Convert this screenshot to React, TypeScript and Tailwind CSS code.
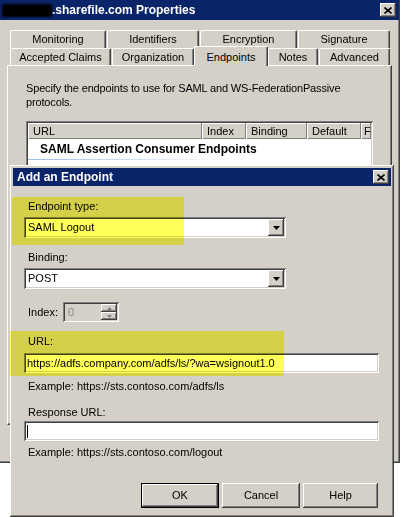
const raised =
  "shadow-[inset_-1px_-1px_#404040,inset_1px_1px_#ffffff,inset_-2px_-2px_#808080,inset_2px_2px_#d4d0c8]";
const sunken =
  "shadow-[inset_1px_1px_#808080,inset_-1px_-1px_#ffffff,inset_2px_2px_#404040,inset_-2px_-2px_#d4d0c8]";

function CloseBox() {
  return (
    <div className={`w-[16px] h-[14px] bg-[#d4d0c8] flex items-center justify-center ${raised}`}>
      <svg width="8" height="7" viewBox="0 0 8 7">
        <path d="M0.5 0.5L7.5 6.5M7.5 0.5L0.5 6.5" stroke="#000" strokeWidth="1.6" />
      </svg>
    </div>
  );
}

function DownArrow() {
  return (
    <svg width="7" height="4" viewBox="0 0 7 4">
      <path d="M0 0H7L3.5 4Z" fill="#000" />
    </svg>
  );
}

function Combo({ value }: { value: string }) {
  return (
    <div className={`relative w-[262px] h-[21px] bg-white flex items-center pl-[4px] ${sunken}`}>
      <span>{value}</span>
      <div
        className={`absolute right-[2px] top-[2px] w-[16px] h-[17px] bg-[#d4d0c8] flex items-center justify-center ${raised}`}
      >
        <DownArrow />
      </div>
    </div>
  );
}

function Tab({ label, w, selected }: { label: string; w: string; selected?: boolean }) {
  if (selected) {
    return (
      <div
        className={`${w} h-[20px] -mt-[2px] -mb-[1px] relative z-10 bg-[#d4d0c8] border-t border-l border-white border-r border-r-[#404040] rounded-t-[2px] shadow-[inset_-1px_0_#808080] flex justify-center pt-[2px]`}
      >
        {label}
      </div>
    );
  }
  return (
    <div
      className={`${w} h-full bg-[#d4d0c8] border-t border-l border-white border-r border-r-[#404040] rounded-t-[2px] shadow-[inset_-1px_0_#808080] flex items-center justify-center`}
    >
      {label}
    </div>
  );
}

function Header({ label, w, pl = "pl-[5px]" }: { label: string; w: string; pl?: string }) {
  return (
    <div
      className={`${w} ${pl} shrink-0 h-full flex items-center border-r border-[#808080] shadow-[inset_1px_1px_#ffffff,inset_0_-1px_#808080] whitespace-nowrap`}
    >
      {label}
    </div>
  );
}

function Button({ label, w, def }: { label: string; w: string; def?: boolean }) {
  return (
    <div
      className={`${w} h-[25px] bg-[#d4d0c8] flex items-center justify-center ${
        def ? "border border-black" : ""
      } ${raised}`}
    >
      {label}
    </div>
  );
}

function Label({ children }: { children: React.ReactNode }) {
  return <div className="h-[13px] leading-[13px] pl-[4px]">{children}</div>;
}

export default function App() {
  return (
    <div className="relative w-[401px] h-[517px] bg-white overflow-hidden font-['Liberation_Sans',Arial,sans-serif] text-[11px] text-black">
      {/* properties window */}
      <div className="absolute left-0 top-0 w-[400px] h-[463px] bg-[#d4d0c8] border-r border-b border-[#404040] shadow-[inset_-1px_-1px_#808080] flex flex-col">
        <div className="h-[20px] bg-[#0a246a] flex items-center pl-[2px] pr-[3px]">
          <div className="w-[50px] h-[13px] bg-black rounded-[2px] blur-[1px]" />
          <span className="text-white font-bold text-[12px]">.sharefile.com Properties</span>
          <div className="ml-auto">
            <CloseBox />
          </div>
        </div>

        <div className="pl-[7px] mt-[10px]">
          <div className="pl-[3px] flex flex-col">
            <div className="flex gap-[1px] h-[18px]">
              <Tab label="Monitoring" w="w-[96px]" />
              <Tab label="Identifiers" w="w-[92px]" />
              <Tab label="Encryption" w="w-[97px]" />
              <Tab label="Signature" w="w-[92px]" />
            </div>
            <div className="flex h-[17px]">
              <Tab label="Accepted Claims" w="w-[101px]" />
              <div className="w-[1px]" />
              <Tab label="Organization" w="w-[82px]" />
              <Tab label="Endpoints" w="w-[74px]" selected />
              <Tab label="Notes" w="w-[50px]" />
              <div className="w-[1px]" />
              <Tab label="Advanced" w="w-[71px]" />
            </div>
          </div>

          <div className="w-[385px] h-[360px] border-t border-l border-white border-r border-b border-r-[#404040] border-b-[#404040] shadow-[inset_-1px_-1px_#808080] pl-[18px] pt-[15px]">
            <p className="leading-[14px] tracking-[-0.15px]">
              Specify the endpoints to use for SAML and WS-FederationPassive
              <br />
              protocols.
            </p>
            <div className={`mt-[12px] w-[347px] h-[80px] bg-white p-[2px] ${sunken}`}>
              <div className="h-[16px] flex bg-[#d4d0c8]">
                <Header label="URL" w="w-[174px]" />
                <Header label="Index" w="w-[44px]" />
                <Header label="Binding" w="w-[61px]" />
                <Header label="Default" w="w-[54px]" />
                <Header label="F" w="w-[10px]" pl="pl-[3px]" />
              </div>
              <div className="h-[20px] flex items-center pl-[12px] font-bold text-[12px]">
                SAML Assertion Consumer Endpoints
              </div>
              <div className="h-[1px] w-[200px] bg-gradient-to-r from-[#9cc0ea] to-transparent" />
            </div>
          </div>
        </div>
      </div>

      {/* Add an Endpoint dialog */}
      <div className={`absolute left-[10px] top-[165px] w-[384px] h-[352px] bg-[#d4d0c8] ${raised}`}>
        <div className="mx-[3px] mt-[3px] h-[18px] bg-[#0a246a] flex items-center pl-[4px] pr-[2px]">
          <span className="text-white font-bold text-[12px]">Add an Endpoint</span>
          <div className="ml-auto">
            <CloseBox />
          </div>
        </div>

        <div className="pl-[14px] flex flex-col">
          <div className="mt-[14px]">
            <Label>Endpoint type:</Label>
          </div>
          <div className="mt-[4px]">
            <Combo value="SAML Logout" />
          </div>
          <div className="mt-[13px]">
            <Label>Binding:</Label>
          </div>
          <div className="mt-[4px]">
            <Combo value="POST" />
          </div>

          <div className="mt-[13px] h-[20px] flex items-center">
            <div className="w-[39px] pl-[4px]">Index:</div>
            <div className={`w-[56px] h-[20px] flex ${sunken}`}>
              <div className="flex-1 pl-[5px] flex items-center text-[#8a8a8a]">0</div>
              <div className="w-[16px] mr-[2px] my-[2px] flex flex-col">
                <div className={`flex-1 bg-[#d4d0c8] flex items-center justify-center ${raised}`}>
                  <svg width="5" height="3" viewBox="0 0 5 3">
                    <path d="M0 3H5L2.5 0Z" fill="#808080" />
                  </svg>
                </div>
                <div className={`flex-1 bg-[#d4d0c8] flex items-center justify-center ${raised}`}>
                  <svg width="5" height="3" viewBox="0 0 5 3">
                    <path d="M0 0H5L2.5 3Z" fill="#808080" />
                  </svg>
                </div>
              </div>
            </div>
          </div>

          <div className="mt-[13px]">
            <Label>URL:</Label>
          </div>
          <div className={`mt-[5px] w-[355px] h-[20px] bg-white flex items-center pl-[3px] ${sunken}`}>
            https://adfs.company.com/adfs/ls/?wa=wsignout1.0
          </div>
          <div className="mt-[7px]">
            <Label>Example: https://sts.contoso.com/adfs/ls</Label>
          </div>

          <div className="mt-[13px]">
            <Label>Response URL:</Label>
          </div>
          <div className={`mt-[2px] w-[355px] h-[20px] bg-white flex items-center pl-[3px] ${sunken}`}>
            <div className="w-[1px] h-[13px] bg-black" />
          </div>
          <div className="mt-[5px]">
            <Label>Example: https://sts.contoso.com/logout</Label>
          </div>

          <div className="mt-[24px] pr-[1px] w-[355px] flex justify-end gap-[3px]">
            <Button label="OK" w="w-[78px]" def />
            <Button label="Cancel" w="w-[78px]" />
            <Button label="Help" w="w-[75px]" />
          </div>
        </div>

        {/* yellow marker highlights */}
        <div className="absolute left-[2px] top-[32px] w-[172px] h-[48px] bg-[#ffff5a] mix-blend-multiply" />
        <div className="absolute left-0 top-[166px] w-[274px] h-[45px] bg-[#ffff5a] mix-blend-multiply" />
      </div>
    </div>
  );
}
